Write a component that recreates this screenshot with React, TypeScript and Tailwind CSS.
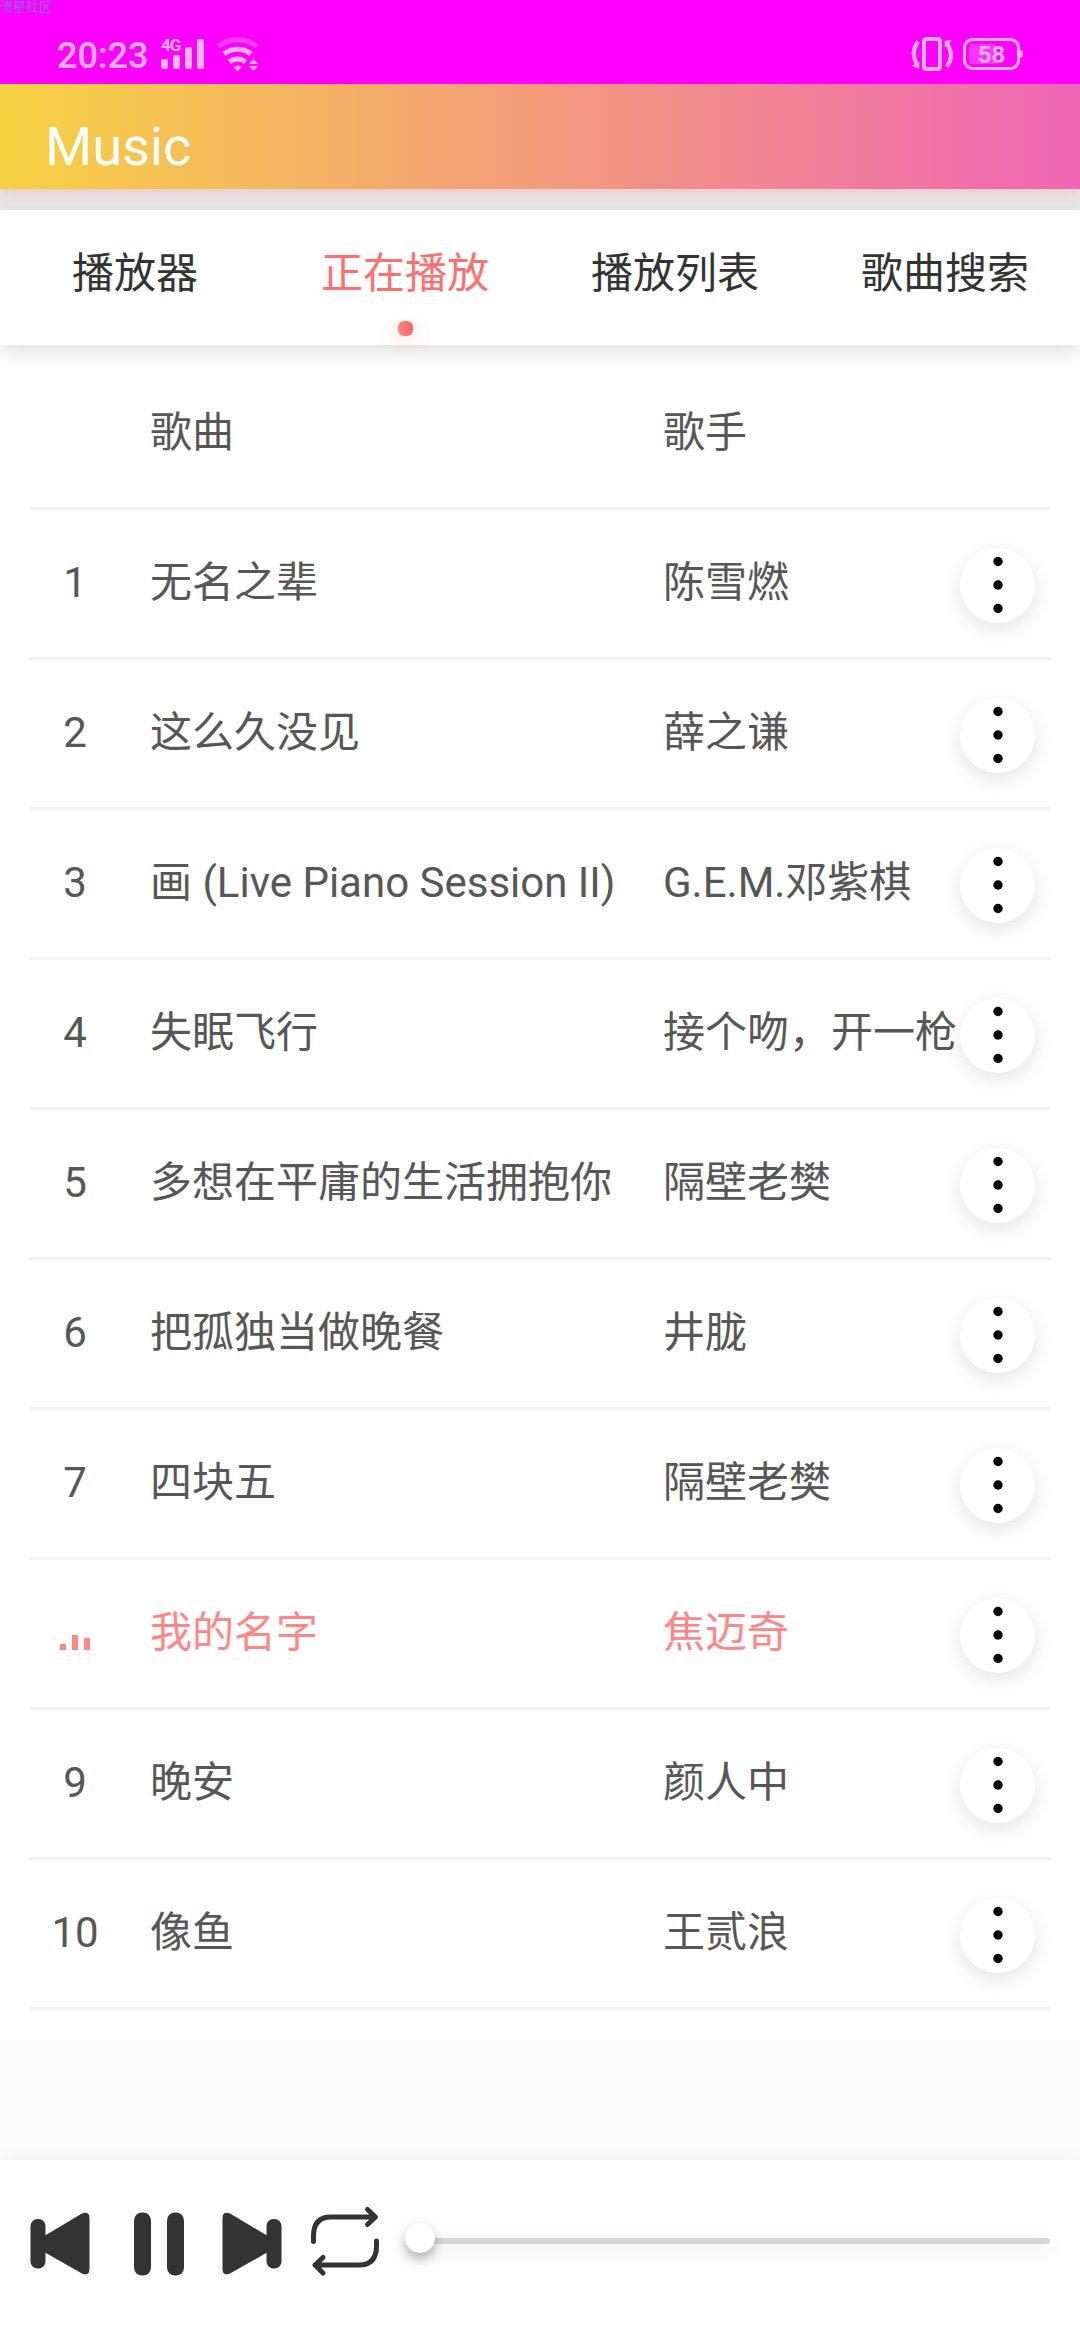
const tabs = [
    { label: "播放器" },
    { label: "正在播放", active: true },
    { label: "播放列表" },
    { label: "歌曲搜索" },
];

const songs = [
    { name: "无名之辈", singer: "陈雪燃" },
    { name: "这么久没见", singer: "薛之谦" },
    { name: "画 (Live Piano Session II)", singer: "G.E.M.邓紫棋" },
    { name: "失眠飞行", singer: "接个吻，开一枪" },
    { name: "多想在平庸的生活拥抱你", singer: "隔壁老樊" },
    { name: "把孤独当做晚餐", singer: "井胧" },
    { name: "四块五", singer: "隔壁老樊" },
    { name: "我的名字", singer: "焦迈奇", playing: true },
    { name: "晚安", singer: "颜人中" },
    { name: "像鱼", singer: "王贰浪" },
];

function StatusBar() {
    return (
        <div className="relative flex h-[84px] items-start justify-between bg-[#ff00ff] pl-[57px] pr-[56px] text-[#ffb2ff]">
            <span className="absolute left-0 top-0 text-[13px] leading-[13px] text-[#8f66f5]">流星社区</span>
            <div className="flex items-start">
                <span className="mt-[35px] w-[104px] text-[36px] font-medium leading-[42px]">20:23</span>
                <div className="relative mt-[38px] h-[32px] w-[44px]">
                    <span className="absolute left-0 top-0 text-[17px] font-bold leading-[14px] tracking-[-1px]">4G</span>
                    <svg className="absolute left-0 top-0" width="44" height="32" fill="currentColor">
                        <rect x="0" y="21" width="7" height="10" rx="2" />
                        <rect x="12" y="17" width="7" height="14" rx="2" />
                        <rect x="24" y="9" width="7" height="22" rx="2" />
                        <rect x="36" y="1" width="7" height="30" rx="2" />
                    </svg>
                </div>
                <svg className="ml-[10px] mt-[37px]" width="44" height="36" fill="none" stroke="currentColor" strokeWidth="5">
                    <path d="M3 9.500a32 32 0 0 1 39 0" opacity="0.35" />
                    <path d="M9 17a22 22 0 0 1 27 0" />
                    <path d="M14.500 25a12.500 12.500 0 0 1 16 0" />
                    <path d="M18.500 30a6.500 6.500 0 0 1 8 0l-4 4.500z" fill="currentColor" stroke="none" />
                    <path d="M34 27l4.500-5 4.500 5zM34 29h9l-4.500 5z" fill="currentColor" stroke="none" />
                </svg>
            </div>
            <div className="mt-[37px] flex items-start">
                <svg width="45" height="35" fill="none" stroke="currentColor">
                    <rect x="14" y="2" width="16" height="30" rx="2.500" strokeWidth="4" />
                    <path d="M8 4.500q-8 11-1 23M37 29.500q8-11 0-23" strokeWidth="4" />
                    <path d="M2.500 29l6.500-4v6.500zM41.500 3.500l-6.500 0.500v6z" fill="currentColor" strokeWidth="0.500" />
                </svg>
                <svg className="ml-[7px]" width="62" height="36" fill="none">
                    <rect x="2.500" y="2.500" width="54" height="29" rx="8" stroke="currentColor" strokeWidth="3" />
                    <rect x="7" y="7" width="27" height="20" rx="4" fill="#ff33ff" />
                    <path d="M58 13q3 0 3 4t-3 4z" fill="currentColor" />
                    <text x="29.500" y="26" textAnchor="middle" fill="currentColor" className="text-[24px] font-bold">58</text>
                </svg>
            </div>
        </div>
    );
}

function MoreButton() {
    return (
        <button className="flex h-[75px] w-[75px] items-center justify-center rounded-full bg-white shadow-[0_6px_18px_rgba(0,0,0,0.1)]">
            <svg width="12" height="60" fill="#000">
                <circle cx="6" cy="6.500" r="4.700" />
                <circle cx="6" cy="30" r="4.700" />
                <circle cx="6" cy="53.500" r="4.700" />
            </svg>
        </button>
    );
}

function PlayingBars() {
    return (
        <div className="mt-[19px] flex h-[15px] items-end gap-[6px]">
            <span className="h-[6px] w-[6px] bg-[#ff8787]" />
            <span className="h-[15px] w-[6px] bg-[#ff8787]" />
            <span className="h-[12px] w-[6px] bg-[#ff8787]" />
        </div>
    );
}

function PlayerBar() {
    return (
        <div className="flex h-[180px] items-start bg-[#fefefe] pl-[30px] pr-[30px] text-[#333] shadow-[0_0_18px_rgba(0,0,0,0.06)]">
            <svg className="mt-[51px]" width="60" height="66" viewBox="0 0 60 66" fill="currentColor">
                <rect x="0.500" y="8" width="15" height="49.500" rx="7" />
                <path d="M15 24.500L52 2.500Q59.500 0 59.500 7V58Q59.500 65.500 52 62.500L15 41.500z" />
            </svg>
            <svg className="ml-[44px] mt-[51px]" width="50" height="66" fill="currentColor">
                <rect x="0" y="1.500" width="17" height="63" rx="8" />
                <rect x="33" y="1.500" width="17" height="63" rx="8" />
            </svg>
            <svg className="ml-[38px] mt-[51px]" width="60" height="66" viewBox="0 0 60 66" fill="currentColor">
                <rect x="44.500" y="8" width="15" height="49.500" rx="7" />
                <path d="M45 24.500L8 2.500Q.5 0 .5 7V58Q.5 65.500 8 62.500L45 41.500z" />
            </svg>
            <svg className="ml-[28px] mt-[45px]" width="70" height="72" fill="none" stroke="currentColor" strokeWidth="5" strokeLinecap="round" strokeLinejoin="round">
                <path d="M3.500 36.500V31Q3.500 12 21 12H65M57.500 4.500l8 7.500-8 7.500" />
                <path d="M66.500 36V41Q66.500 60 49 60H5M13 52.500L5 60l8 8" />
            </svg>
            <div className="relative ml-[25px] mt-[78px] h-[6px] flex-1 rounded-[3px] bg-[#d6d6d6] shadow-[0_6px_18px_rgba(0,0,0,0.1)]">
                <span className="absolute left-0 top-[-15px] h-[30px] w-[30px] rounded-full bg-white shadow-[0_6px_12px_rgba(0,0,0,0.3)]" />
            </div>
        </div>
    );
}

export default function App() {
    return (
        <div className="flex h-[2340px] w-[1080px] flex-col overflow-hidden bg-[#fcfcfc] font-['Roboto','Noto_Sans_CJK_SC',sans-serif]">
            <StatusBar />
            <div className="bg-[#e9e9e9] pb-[21px]">
                <header className="h-[105px] bg-linear-to-r/srgb from-[#f6d242] to-[#f065b5] pl-[45px] pt-[31px] text-[54px] leading-[64px] text-white shadow-[0_4px_14px_rgba(255,82,82,0.25)]">
                    Music
                </header>
            </div>

            <nav className="relative z-10 flex h-[135px] bg-[#fefefe] text-[42px] text-[#333] shadow-[0_6px_18px_rgba(0,0,0,0.12)]">
                {tabs.map((tab) => (
                    <div key={tab.label} className="flex w-[270px] flex-col items-center pt-[33px]">
                        <span className={tab.active ? "leading-[62px] text-[#ff6f70]" : "leading-[62px]"}>{tab.label}</span>
                        {tab.active && (
                            <span className="mt-[16px] h-[15px] w-[15px] rounded-[6px] bg-linear-to-r from-[#ff8787] to-[#ff5f5f] shadow-[0_6px_18px_rgba(255,95,95,0.25)]" />
                        )}
                    </div>
                ))}
            </nav>

            <main className="bg-[#fefefe] px-[30px] pb-[30px] pt-[15px] text-[42px] leading-[62px] text-[#575757]">
                <div className="flex h-[150px] items-center border-b-[3px] border-[#f3f3f3] pb-[1px]">
                    <span className="w-[513px] pl-[120px]">歌曲</span>
                    <span className="pl-[120px]">歌手</span>
                </div>
                {songs.map((song, i) => (
                    <div
                        key={song.name}
                        className={`flex h-[150px] items-center border-b-[3px] border-[#f3f3f3] ${song.playing ? "text-[#ff8787]" : ""}`}
                    >
                        <div className="flex w-[90px] justify-center pb-[1px]">
                            {song.playing ? <PlayingBars /> : i + 1}
                        </div>
                        <div className="w-[513px] whitespace-nowrap pb-[1px] pl-[30px]">{song.name}</div>
                        <div className="w-[327px] whitespace-nowrap pb-[1px] pl-[30px]">{song.singer}</div>
                        <div className="pt-[3px]">
                            <MoreButton />
                        </div>
                    </div>
                ))}
            </main>

            <div className="h-[120px]" />
            <PlayerBar />
        </div>
    );
}
